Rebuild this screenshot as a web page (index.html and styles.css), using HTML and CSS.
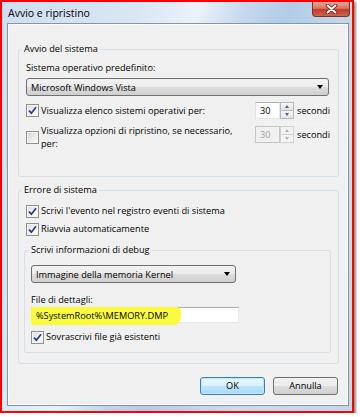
FILE: index.html
```html
<!DOCTYPE html>
<html lang="it">
<head>
    <meta charset="UTF-8">
    <title>Avvio e ripristino</title>
    <link rel="stylesheet" href="styles.css">
</head>
<body>
    <div class="shot">
        <div class="window">
            <!-- Title bar -->
            <div class="titlebar">
                <span class="title">Avvio e ripristino</span>
                <span class="close">
                    <svg width="13" height="10" viewBox="0 0 13 10">
                        <path d="M2.5 1.5 L10.5 8.5 M10.5 1.5 L2.5 8.5" stroke="#5a1d14" stroke-width="3.6" stroke-linecap="round"/>
                        <path d="M2.5 1.5 L10.5 8.5 M10.5 1.5 L2.5 8.5" stroke="#fff" stroke-width="2" stroke-linecap="round"/>
                    </svg>
                </span>
            </div>

            <div class="client">
                <span class="watermark">Cattura finestra</span>

                <!-- Avvio del sistema -->
                <fieldset class="group group-boot">
                    <legend>Avvio del sistema</legend>
                    <div class="label first">Sistema operativo predefinito:</div>
                    <div class="combo combo-os">
                        <span>Microsoft Windows Vista</span>
                        <span class="arrow"></span>
                    </div>

                    <div class="opt-row row-list">
                        <div class="check">
                            <span class="box checked">
                                <svg width="9" height="9" viewBox="0 0 9 9"><path d="M1 4.6 L3.4 7.2 L8 1.2" fill="none" stroke="#2a3a86" stroke-width="1.7"/></svg>
                            </span>
                            <span>Visualizza elenco sistemi operativi per:</span>
                        </div>
                        <div class="spin-group">
                            <div class="spin">
                                <span class="spin-value">30</span>
                                <span class="spin-btns">
                                    <span class="spin-btn"><i class="up"></i></span>
                                    <span class="spin-btn"><i class="down"></i></span>
                                </span>
                            </div>
                            <span>secondi</span>
                        </div>
                    </div>

                    <div class="opt-row row-recovery">
                        <div class="check">
                            <span class="box"></span>
                            <span class="two-lines">Visualizza opzioni di ripristino, se necessario,<br>per:</span>
                        </div>
                        <div class="spin-group top">
                            <div class="spin disabled">
                                <span class="spin-value">30</span>
                                <span class="spin-btns">
                                    <span class="spin-btn"><i class="up"></i></span>
                                    <span class="spin-btn"><i class="down"></i></span>
                                </span>
                            </div>
                            <span>secondi</span>
                        </div>
                    </div>
                </fieldset>

                <!-- Errore di sistema -->
                <fieldset class="group group-error">
                    <legend>Errore di sistema</legend>
                    <div class="check row-log">
                        <span class="box checked">
                            <svg width="9" height="9" viewBox="0 0 9 9"><path d="M1 4.6 L3.4 7.2 L8 1.2" fill="none" stroke="#2a3a86" stroke-width="1.7"/></svg>
                        </span>
                        <span>Scrivi l'evento nel registro eventi di sistema</span>
                    </div>
                    <div class="check row-restart">
                        <span class="box checked">
                            <svg width="9" height="9" viewBox="0 0 9 9"><path d="M1 4.6 L3.4 7.2 L8 1.2" fill="none" stroke="#2a3a86" stroke-width="1.7"/></svg>
                        </span>
                        <span>Riavvia automaticamente</span>
                    </div>

                    <fieldset class="group group-debug">
                        <legend>Scrivi informazioni di debug</legend>
                        <div class="combo combo-dump">
                            <span>Immagine della memoria Kernel</span>
                            <span class="arrow"></span>
                        </div>
                        <div class="label file-label">File di dettagli:</div>
                        <div class="textbox">
                            <span class="marker">%SystemRoot%\MEMORY.DMP</span>
                        </div>
                        <div class="check row-overwrite">
                            <span class="box checked">
                                <svg width="9" height="9" viewBox="0 0 9 9"><path d="M1 4.6 L3.4 7.2 L8 1.2" fill="none" stroke="#2a3a86" stroke-width="1.7"/></svg>
                            </span>
                            <span>Sovrascrivi file già esistenti</span>
                        </div>
                    </fieldset>
                </fieldset>

                <!-- Buttons -->
                <div class="buttons">
                    <span class="btn default">OK</span>
                    <span class="btn">Annulla</span>
                </div>
            </div>
        </div>
    </div>
</body>
</html>
```

FILE: styles.css
```css
/* Global */
* {
    box-sizing: border-box;
}

body {
    margin: 0;
    background-color: #fff;
    font-family: 'Open Sans', 'Liberation Sans', sans-serif;
    font-size: 9.2px;
    color: #000;
}

/* Window frame */
.shot {
    width: 354px;
    height: 413px;
    border: 2px solid #f00;
    box-shadow: 2px 2px 2px rgba(0, 0, 0, 0.45);
}

.window {
    height: 100%;
    display: flex;
    flex-direction: column;
    padding: 0 3px 5px 5px;
    background: linear-gradient(110deg, #cddff0 0%, #d9e7f4 28%, #ebf2f9 40%, #c3d7ec 50%, #b3cce6 58%, #cadcef 76%, #c1d6ec 100%);
}

.titlebar {
    height: 21px;
    display: flex;
    justify-content: space-between;
    align-items: flex-start;
}

.title {
    margin: 4px 0 0 1px;
    font-size: 10.5px;
    line-height: 14px;
}

.close {
    width: 38px;
    height: 15px;
    margin-right: -1px;
    display: flex;
    align-items: center;
    justify-content: center;
    border: 1px solid #7a3126;
    border-top: none;
    border-radius: 0 0 4px 4px;
    background: linear-gradient(#eba595 0%, #d87461 45%, #c13a28 55%, #d0644a 100%);
}

/* Client area */
.client {
    flex: 1;
    position: relative;
    padding: 18px 9px 0 10px;
    border: 1px solid #8295a9;
    box-shadow: inset 0 0 0 1px #fbfbfb;
    background-color: #f0f0f0;
}

.watermark {
    position: absolute;
    left: 251px;
    top: 96px;
    font-size: 7px;
    line-height: 7px;
    letter-spacing: 1.1px;
    color: #f6f6f6;
}

/* Group boxes */
.group {
    margin: 0;
    padding: 0 9px 0 7px;
    border: 1px solid #d5dfe5;
    border-radius: 3px;
}

.group legend {
    margin-left: -4px;
    padding: 0 2px;
    line-height: 14px;
}

.group-boot {
    height: 135px;
}

.group-error {
    height: 181px;
    margin-top: 6px;
    padding-right: 7px;
}

.group-debug {
    height: 110px;
    margin: 7px 0 0 -2px;
    padding: 0 6px 0 6px;
}

.group-debug legend {
    margin-left: -2px;
}

.label {
    line-height: 14px;
}

.label.first {
    margin-top: 5px;
}

/* Combo boxes */
.combo {
    height: 18px;
    display: flex;
    align-items: center;
    justify-content: space-between;
    padding: 0 5px 0 4px;
    border: 1px solid #707070;
    border-radius: 3px;
    background: linear-gradient(#f2f2f2 0%, #ebebeb 50%, #dddddd 50%, #cfcfcf 100%);
}

.combo-os {
    margin-top: 3px;
}

.combo-dump {
    width: 205px;
    margin-top: 8px;
}

.arrow {
    width: 0;
    height: 0;
    border-left: 3.5px solid transparent;
    border-right: 3.5px solid transparent;
    border-top: 4px solid #000;
}

/* Checkbox rows */
.check {
    display: flex;
    align-items: center;
    line-height: 14px;
}

.box {
    width: 13px;
    height: 13px;
    margin-right: 2px;
    flex-shrink: 0;
    display: flex;
    align-items: center;
    justify-content: center;
    border: 1px solid #8e8f8f;
    background: linear-gradient(135deg, #cfd0d2 0%, #eeeeee 60%, #fbfbfb 100%);
    box-shadow: inset 0 0 0 1px #f4f4f4;
}

.box.checked {
    background: linear-gradient(135deg, #dcdcdc 0%, #f4f4f4 60%, #fff 100%);
}

.two-lines {
    line-height: 12.5px;
}

.opt-row {
    display: flex;
    align-items: center;
    justify-content: space-between;
}

.row-list {
    margin-top: 6px;
    height: 17px;
}

.row-recovery {
    margin-top: 6px;
}

.row-log {
    margin-top: 7px;
}

.row-restart {
    margin-top: 4px;
}

.row-overwrite {
    margin-top: 7px;
}

/* Spinners */
.spin-group {
    width: 74px;
    display: flex;
    align-items: center;
    gap: 3px;
}

.spin-group.top {
    align-self: flex-start;
    margin-top: 1px;
}

.spin {
    display: flex;
    height: 17px;
}

.spin-value {
    width: 25px;
    padding-left: 4px;
    line-height: 15px;
    border: 1px solid;
    border-color: #abadb3 #e3e9ef #e3e9ef #e2e3ea;
    background-color: #fff;
}

.spin-btns {
    width: 14px;
    display: flex;
    flex-direction: column;
}

.spin-btn {
    flex: 1;
    display: flex;
    align-items: center;
    justify-content: center;
    border: 1px solid #b6b8bc;
    background: linear-gradient(#f6f6f6, #e2e3e5);
}

.spin-btn + .spin-btn {
    border-top: none;
}

.up, .down {
    width: 0;
    height: 0;
    border-left: 2.5px solid transparent;
    border-right: 2.5px solid transparent;
}

.up {
    border-bottom: 3px solid #4d6185;
}

.down {
    border-top: 3px solid #4d6185;
}

.spin.disabled .spin-value {
    color: #a0a0a0;
    background-color: #f0f0f0;
    border-color: #c6c6c6;
}

.spin.disabled .spin-btn {
    border-color: #d0d0d0;
    background: #f3f3f3;
}

.spin.disabled .up {
    border-bottom-color: #b0b0b0;
}

.spin.disabled .down {
    border-top-color: #b0b0b0;
}

/* Text box */
.file-label {
    margin-top: 10px;
}

.textbox {
    width: 208px;
    height: 16px;
    border: 1px solid;
    border-color: #abadb3 #e3e9ef #e3e9ef #e2e3ea;
    background-color: #fff;
}

.marker {
    display: inline-block;
    height: 18px;
    margin: -1px 0 0 -1px;
    padding: 0 13px 0 5px;
    line-height: 17px;
    border-radius: 2px 5px 8px 3px;
    background-color: #fbfb3c;
}

/* Buttons */
.buttons {
    display: flex;
    justify-content: flex-end;
    gap: 8px;
    margin-top: 13px;
    padding-right: 1px;
}

.btn {
    width: 65px;
    height: 18px;
    line-height: 16px;
    text-align: center;
    border: 1px solid #707070;
    border-radius: 3px;
    background: linear-gradient(#f2f2f2 0%, #ebebeb 50%, #dddddd 50%, #cfcfcf 100%);
}

.btn.default {
    border-color: #3c7fb1;
    box-shadow: inset 0 0 0 1px #bfe6f9;
    background: linear-gradient(#eaf6fd 0%, #d9f0fc 50%, #bee6fd 50%, #a7d9f5 100%);
}
```
